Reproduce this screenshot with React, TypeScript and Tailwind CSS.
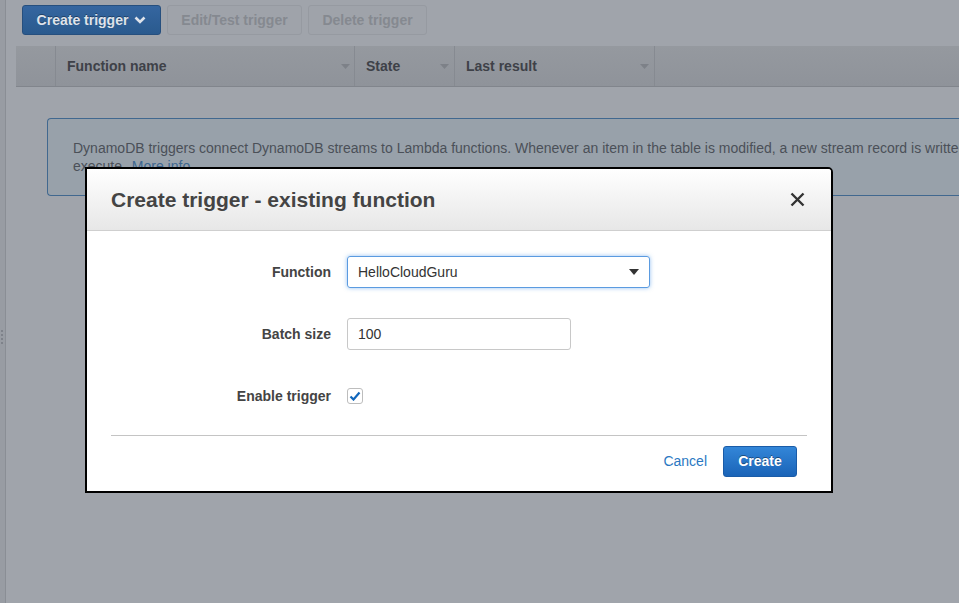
import React from "react";

const font = { fontFamily: '"Liberation Sans", Arial, Helvetica, sans-serif' };

function Caret() {
  return (
    <svg width="9" height="5" viewBox="0 0 9 5" className="shrink-0">
      <path d="M0 0 L9 0 L4.5 5 Z" fill="#7d8188" />
    </svg>
  );
}

export default function App() {
  return (
    <div
      className="relative w-[959px] h-[603px] overflow-hidden bg-[#a0a4ab] flex"
      style={font}
    >
      {/* left strip */}
      <div className="w-[6px] shrink-0 h-full bg-[#989ca3] border-r border-[#8a8e95] flex flex-col items-start pt-[330px] gap-[2px] pl-[1px]">
        <div className="w-[2px] h-[2px] bg-[#7e828a]" />
        <div className="w-[2px] h-[2px] bg-[#7e828a]" />
        <div className="w-[2px] h-[2px] bg-[#7e828a]" />
        <div className="w-[2px] h-[2px] bg-[#7e828a]" />
      </div>

      <div className="flex-1 min-w-0 flex flex-col">
        {/* toolbar */}
        <div className="flex gap-[6px] pl-[16px] pt-[5px] h-[46px] shrink-0">
          <div className="h-[30px] w-[139px] rounded-[3px] border border-[#264f7e] bg-gradient-to-b from-[#3566a0] to-[#2a5a8e] flex items-center justify-center gap-[6px] text-[14px] font-bold text-[#dfe3ea] [text-shadow:0_-1px_0_rgba(0,0,0,0.35)]">
            <span>Create trigger</span>
            <svg width="12" height="8" viewBox="0 0 12 8">
              <path d="M1.5 1.5 L6 6 L10.5 1.5" stroke="#dfe3ea" strokeWidth="2.6" fill="none" />
            </svg>
          </div>
          <div className="h-[30px] w-[135px] rounded-[3px] border border-[#969aa1] bg-[#9fa3aa] flex items-center justify-center text-[14px] font-bold text-[#858990]">
            Edit/Test trigger
          </div>
          <div className="h-[30px] w-[119px] rounded-[3px] border border-[#969aa1] bg-[#9fa3aa] flex items-center justify-center text-[14px] font-bold text-[#858990]">
            Delete trigger
          </div>
        </div>

        {/* table header */}
        <div className="ml-[10px] h-[41px] shrink-0 flex bg-gradient-to-b from-[#95999f] to-[#8f939a] border-b border-[#81858c] text-[14px] font-bold text-[#3e4148]">
          <div className="w-[40px] border-r border-[#868a91]" />
          <div className="w-[299px] flex items-center justify-between pl-[11px] pr-[4px] border-r border-[#868a91]">
            <span>Function name</span>
            <Caret />
          </div>
          <div className="w-[100px] flex items-center justify-between pl-[11px] pr-[5px] border-r border-[#868a91]">
            <span>State</span>
            <Caret />
          </div>
          <div className="w-[200px] flex items-center justify-between pl-[11px] pr-[5px] border-r border-[#868a91]">
            <span>Last result</span>
            <Caret />
          </div>
          <div className="flex-1" />
        </div>

        {/* info box */}
        <div className="ml-[41px] mt-[31px] h-[78px] shrink-0 rounded-l-[4px] border border-r-0 border-[#41688f] bg-[#98a1aa] pl-[25px] pt-[20px] text-[14px] leading-[18px] text-[#4b5058] whitespace-nowrap overflow-hidden">
          <div>
            DynamoDB triggers connect DynamoDB streams to Lambda functions. Whenever an item in the table is modified, a new stream record is written, which in turn triggers the Lambda function to
          </div>
          <div>
            execute. <span className="text-[#3e6790] ml-[2px]">More info</span>
          </div>
        </div>
      </div>

      {/* modal */}
      <div className="absolute left-[85px] top-[167px] w-[748px] h-[326px] border-2 border-black rounded-tr-[5px] bg-white flex flex-col overflow-hidden">
        <div className="h-[62px] shrink-0 bg-gradient-to-b from-white to-[#e7e7e7] border-b border-[#cfcfcf] flex items-center justify-between pl-[24px] pr-[26px]">
          <span className="text-[21px] font-bold text-[#444]">Create trigger - existing function</span>
          <svg width="15" height="15" viewBox="0 0 15 15">
            <path d="M1.5 1.5 L13.5 13.5 M13.5 1.5 L1.5 13.5" stroke="#333" strokeWidth="2.4" />
          </svg>
        </div>

        <div className="flex flex-col pt-[25px]">
          <div className="flex items-center h-[32px]">
            <div className="w-[244px] text-right text-[14px] font-bold text-[#444]">Function</div>
            <div className="ml-[16px] w-[303px] h-[32px] rounded-[3px] border border-[#5b9be0] shadow-[0_0_4px_rgba(60,140,230,0.55)] flex items-center justify-between pl-[10px] pr-[10px] text-[14px] text-[#333]">
              <span>HelloCloudGuru</span>
              <svg width="10" height="6" viewBox="0 0 10 6">
                <path d="M0 0 L10 0 L5 6 Z" fill="#333" />
              </svg>
            </div>
          </div>

          <div className="flex items-center h-[32px] mt-[30px]">
            <div className="w-[244px] text-right text-[14px] font-bold text-[#444]">Batch size</div>
            <div className="ml-[16px] w-[224px] h-[32px] rounded-[3px] border border-[#c8c8c8] flex items-center pl-[10px] text-[14px] text-[#333]">
              100
            </div>
          </div>

          <div className="flex items-center h-[32px] mt-[30px]">
            <div className="w-[244px] text-right text-[14px] font-bold text-[#444]">Enable trigger</div>
            <div className="ml-[16px] w-[16px] h-[16px] rounded-[3px] border border-[#bdbdbd] bg-white flex items-center justify-center">
              <svg width="12" height="10" viewBox="0 0 12 10">
                <path d="M1.5 5.5 L4.5 8.5 L10.5 1.5" stroke="#1166bb" strokeWidth="2.2" fill="none" />
              </svg>
            </div>
          </div>

          <div className="mx-[24px] mt-[23px] border-t border-[#c4c4c4]" />

          <div className="flex items-center justify-end pr-[34px] pt-[10px] gap-[16px]">
            <span className="text-[14px] text-[#2a78c2]">Cancel</span>
            <div className="w-[74px] h-[31px] rounded-[3px] border border-[#1a5ca8] bg-gradient-to-b from-[#3386d8] to-[#1a64b8] flex items-center justify-center text-[14px] font-bold text-white [text-shadow:0_-1px_0_rgba(0,0,0,0.4)]">
              Create
            </div>
          </div>
        </div>
      </div>
    </div>
  );
}
